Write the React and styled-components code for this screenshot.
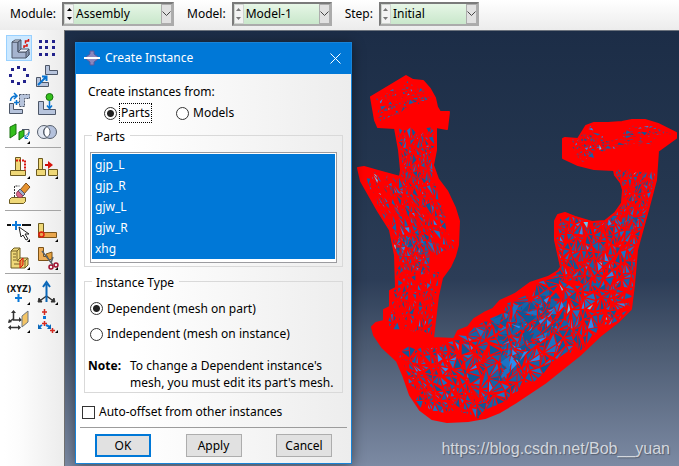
import React, { useState } from "react";
import styled, { createGlobalStyle, css } from "styled-components";

const GlobalStyle = createGlobalStyle`
  *, *::before, *::after { box-sizing: border-box; }
  body {
    margin: 0;
    background: #fff;
    color: #000;
    font-family: "Noto Sans", "Open Sans", sans-serif;
    font-size: 12px;
    line-height: 18px;
  }
  button, select, input { font: inherit; color: inherit; margin: 0; }
`;

/* ---------- page frame ---------- */

const Page = styled.div`
  display: flex;
  flex-direction: column;
  min-height: 100vh;
`;

const ContextBar = styled.header`
  display: flex;
  align-items: center;
  gap: 13px;
  height: 30px;
  padding: 0 10px 2px;
  background: linear-gradient(#fff, #ececec);
`;

const ContextLabel = styled.label`
  display: flex;
  align-items: center;
  gap: 6px;
`;

const Combo = styled.span`
  display: flex;
  width: ${(p) => p.$width}px;
  height: 24px;
  border: 2px solid;
  border-color: #7a7a7a #ababab #ababab #7a7a7a;
  background: linear-gradient(#e6f6e6, #c9e7cb);
`;

const Spinner = styled.span`
  display: flex;
  flex-direction: column;
  flex: none;
  width: 10px;
  border: 1px solid #cfd4cf;
  background: #f3f3f3;
  color: ${(p) => (p.$dim ? "#777" : "#000")};
`;

const SpinButton = styled.button`
  display: flex;
  flex: 1;
  align-items: center;
  justify-content: center;
  padding: 0;
  border: 0;
  background: none;
`;

const ComboSelect = styled.select`
  flex: 1;
  min-width: 0;
  padding: 0 2px;
  border: 0;
  outline: 0;
  appearance: none;
  background: transparent;
`;

const ComboArrow = styled.span`
  display: flex;
  align-items: center;
  justify-content: center;
  flex: none;
  width: 11px;
  border: 1px solid #adadad;
  background: #e1e1e1;
`;

const Workspace = styled.div`
  display: flex;
  flex: 1;
`;

const Toolbox = styled.nav`
  flex: none;
  width: 65px;
  padding: 4px 3px 0 5px;
  border-right: 1px solid #6f6f6f;
  background: linear-gradient(90deg, #fff 4px, #fcfcfc 20px, #ececec);
`;

const ToolGroup = styled.div`
  display: grid;
  grid-template-columns: repeat(2, 28px);
  grid-auto-rows: 28px;
  padding-bottom: 1px;
  & + & {
    padding-top: 5px;
    border-top: 1px solid #a5a5a5;
  }
`;

const ToolButton = styled.button`
  position: relative;
  && { margin: 1px; }
  padding: 0;
  border: 0;
  background: none;
  ${(p) =>
    p.$active &&
    css`
      background: #cce8ff;
      box-shadow: inset 0 0 0 1px #99d1ff;
    `}
  svg { display: block; }
`;

const Flyout = styled.span`
  position: absolute;
  right: 2px;
  bottom: 1px;
  width: 3px;
  height: 3px;
  background: #000;
  clip-path: polygon(100% 0, 100% 100%, 0 100%);
`;

const Viewport = styled.main`
  position: relative;
  flex: 1;
  min-width: 0;
  overflow: hidden;
  border-top: 1px solid #6c737d;
  background: linear-gradient(#1c2d47, #24364f 35%, #2c3d57 57%, #4a5970 72%, #7c8aa3);
`;

const MeshDrawing = styled.svg`
  display: block;
  width: 100%;
`;

const Watermark = styled.div`
  position: absolute;
  right: 9px;
  bottom: 6px;
  color: #d3d7de;
  font: 16px/22px "Liberation Sans", sans-serif;
  text-shadow: 1px 1px 1px #555f70;
`;

/* ---------- dialog ---------- */

const Dialog = styled.section`
  position: absolute;
  left: 10px;
  top: 11px;
  width: 277px;
  border: 1px solid #1883d7;
  background: linear-gradient(90deg, #fff 20%, #ededed);
  box-shadow: 0 2px 12px rgba(0, 0, 0, 0.45);
`;

const TitleBar = styled.header`
  display: flex;
  align-items: center;
  gap: 5px;
  height: 31px;
  padding: 0 10px 1px 8px;
  background: #0078d7;
  color: #fff;
`;

const Title = styled.h1`
  flex: 1;
  margin: 0;
  font-size: 12px;
  font-weight: 400;
`;

const CloseButton = styled.button`
  display: flex;
  padding: 0;
  border: 0;
  background: none;
`;

const DialogForm = styled.form`
  padding: 9px 8px 0;
`;

const SourceGroup = styled.div`
  padding: 0 4px;
`;

const SourceOptions = styled.div`
  display: flex;
  gap: 25px;
  padding: 2px 0 0 16px;
`;

const Choice = styled.label`
  display: flex;
  align-items: center;
  gap: 3px;
  height: ${(p) => p.$height || 20}px;
`;

const ChoiceText = styled.span`
  padding: 0 1px;
  outline: ${(p) => (p.$focused ? "1px dotted #000" : "0")};
`;

const Radio = styled.input`
  flex: none;
  width: 13px;
  height: 13px;
  border: 1px solid #333;
  border-radius: 50%;
  appearance: none;
  background: #fff;
  &:checked { background: radial-gradient(circle, #222 3px, #fff 4px); }
`;

const CheckBox = styled.input`
  flex: none;
  width: 13px;
  height: 13px;
  border: 1px solid #333;
  appearance: none;
  background: #fff;
  &:checked { background: #333; box-shadow: inset 0 0 0 2px #fff; }
`;

const Group = styled.fieldset`
  min-width: 0;
  margin: ${(p) => p.$top}px 0 0;
  padding: 0 5px ${(p) => p.$bottom}px;
  border: 1px solid #d9d9d9;
`;

const Legend = styled.legend`
  margin-left: 2px;
  padding: 4px 5px 0 4px;
`;

const PartList = styled.ul`
  margin: 6px 0 0;
  padding: 1px 1px 3px;
  border: 1px solid #9b9b9f;
  list-style: none;
  background: linear-gradient(#fff, #fff) padding-box;
`;

const PartItem = styled.li`
  height: 21px;
  padding: 2px 3px 0;
  background: #0078d7;
  color: #fff;
`;

const Note = styled.p`
  display: flex;
  gap: 9px;
  margin: 14px -4px 0 -2px;
  line-height: 17px;
  white-space: nowrap;
`;

const AutoOffset = styled.div`
  margin: 9px 0 0 -2px;
`;

const Actions = styled.footer`
  display: flex;
  justify-content: space-between;
  margin: 5px -4px 0;
  padding: 6px 15px 6px;
  border-top: 1px solid #9c9c9c;
`;

const ActionButton = styled.button`
  width: 56px;
  height: 23px;
  padding: 0;
  border: ${(p) => (p.$default ? "2px solid #0078d7" : "1px solid #adadad")};
  background: #e1e1e1;
  line-height: 18px;
`;

/* ---------- tool icons ---------- */

const STEEL = { fill: "#b7c4dc", stroke: "#4c5668", strokeWidth: 1 };
const GOLD = { fill: "#efd878", stroke: "#6b5a20", strokeWidth: 1 };
const GREEN = { fill: "#33c01c", stroke: "#197010", strokeWidth: 1 };
const dots = (pts, s = 3) =>
  pts.map(([x, y]) => <rect key={`${x}-${y}`} x={x} y={y} width={s} height={s} fill="#22228c" />);

const icons = {
  instance: (
    <>
      <path d="M7 8h6v10h11v3l-3 3H7z" {...STEEL} fill="#a5b4cf" />
      <path d="M7 8l3-2h6l-3 2zM13 18l3-3h8l-3 3z" {...STEEL} fill="#eaf0fa" />
      <path d="M13 8l3-2v9l-3 3z" {...STEEL} fill="#8796af" />
      <path d="M21 18l3-3v6l-3 3z" {...STEEL} fill="#8796af" />
      <path d="M23.500 5v2h-3v2.500M22 10v2h-3v2" stroke="#d8140c" strokeWidth="1.500" fill="none" />
    </>
  ),
  linear: dots([6, 12, 19].flatMap((y) => [6, 12, 19].map((x) => [x, y]))),
  radial: dots([[12, 4], [18, 6], [21, 12], [18, 18], [12, 20], [6, 18], [4, 12], [6, 6]]),
  translate: (
    <>
      <path d="M12.500 3.500h4v5h8v4h-12z" {...STEEL} />
      <path d="M3.500 15.500h4v5h8v4h-12z" {...STEEL} />
      <path d="M5 23l8-8M9 14.500h4.500V19" stroke="#0874d1" strokeWidth="2" fill="none" />
    </>
  ),
  rotate: (
    <>
      <path d="M14.500 4.500h10v4h-5v8h-5z" {...STEEL} strokeDasharray="2 1" />
      <path d="M4.500 13.500h4v6h9v4h-13z" {...STEEL} />
      <path d="M5.500 11c0-3 1-5 6-5M9 3l3 3-3 3M11.500 10v5M9 12.500h5" stroke="#0874d1" strokeWidth="1.500" fill="none" />
    </>
  ),
  toPoint: (
    <>
      <path d="M5.500 11.500h5v8h12v5h-17z" {...STEEL} />
      <circle cx="16.500" cy="7" r="3.500" {...GREEN} />
      <path d="M16.500 11v7M14 15.500l2.500 3 2.500-3" stroke="#0874d1" strokeWidth="1.500" fill="none" />
    </>
  ),
  face: (
    <>
      <path d="M5 9l6-3v10l-6 4z" {...GREEN} />
      <path d="M14 14l5-2v6l-5 4z" {...GREEN} />
      <path d="M17 11.500h7v3l-3 3" {...STEEL} fill="none" />
      <path d="M20 20c3-1 4-3 4-6M20 17v3.500h3" stroke="#0874d1" strokeWidth="1" fill="none" />
    </>
  ),
  boolean: (
    <>
      <circle cx="11" cy="14" r="6.500" fill="#dfe5f0" stroke="#555e6c" />
      <circle cx="17" cy="14" r="6.500" fill="#b4c1dc" stroke="#555e6c" />
      <path d="M14 8.500a6.500 6.500 0 0 1 0 11 6.500 6.500 0 0 1 0-11z" fill="#fff" stroke="#555e6c" />
    </>
  ),
  replace: (
    <>
      <path d="M10.500 4.500h5v13h-5z" {...GOLD} />
      <path d="M5.500 17.500h15v5h-15z" {...GOLD} />
      <path d="M11 7.500h9v10" stroke="#d8140c" strokeWidth="2" strokeDasharray="2 1" fill="none" />
    </>
  ),
  merge: (
    <>
      <path d="M5.500 5.500h4v11h-4zM3.500 16.500h9v6h-9zM15.500 16.500h9v6h-9z" {...GOLD} />
      <path d="M12 12h4" stroke="#c90d08" strokeWidth="2" />
      <path d="M15 8l5 4-5 4z" fill="#d8140c" />
    </>
  ),
  erase: (
    <>
      <path d="M4.500 18.500l2-2h14v4l-2 2h-14z" {...GOLD} />
      <path d="M9.500 16V5h5" stroke="#333" strokeDasharray="2 1" fill="none" />
      <path d="M15 9l6-7 4 4-6 7z" fill="#e6922f" stroke="#80501b" />
      <path d="M15 8l5 5-2 2-5-5z" fill="#9fb0cb" stroke="#556" />
      <path d="M13 10l5 5c-2 2-4 2-6 0-1-2-1-3 1-5z" fill="#db6788" stroke="#94405a" />
    </>
  ),
  datum: (
    <>
      <path d="M2 9h4M17 9h9" stroke="#111" strokeWidth="2" />
      <path d="M7 9h9M11 5v9" stroke="#0a78d8" strokeWidth="2" />
      <path d="M14 11l2 10 2-2 3 5 2-1-3-5h4z" fill="#fff" stroke="#222" />
    </>
  ),
  partition: (
    <>
      <path d="M5.500 7.500h5v12h-5z" {...GOLD} />
      <path d="M5.500 16.500h18v5h-18z" fill="#e9a64e" stroke="#7b5319" />
      <circle cx="8.500" cy="18.500" r="2.500" fill="none" stroke="#dd2010" strokeWidth="1.500" />
    </>
  ),
  cell: (
    <>
      <path d="M6 7l3-3h6v10h8v7l-3 3H6z" {...GOLD} />
      <path d="M6 7h6v10h8v7M12 7l3-3M12 17l3-3M20 17l3-3M8 10h3M8 13h3M8 16h3M9 20h6" fill="none" stroke="#79642a" />
      <path d="M15 17l3-3v7l-3 3z" fill="#e59a44" stroke="#d8140c" />
    </>
  ),
  cut: (
    <>
      <path d="M5.500 3.500h5v9h5v4h-10z" fill="#eeae59" stroke="#7b5319" />
      <path d="M13 10l6-2v7l-3 1z" fill="#e7a13d" stroke="#7b5319" />
      <path d="M9 7l11 14M20 13l-2 6" stroke="#58616a" strokeWidth="1.500" />
      <circle cx="18" cy="23" r="2" fill="none" stroke="#a01030" strokeWidth="1.500" />
      <circle cx="23" cy="21" r="2" fill="none" stroke="#a01030" strokeWidth="1.500" />
    </>
  ),
  xyz: (
    <>
      <text x="14" y="13" textAnchor="middle" fontFamily="DejaVu Sans" fontWeight="700" fontSize="8" fill="#111">(XYZ)</text>
      <path d="M10 19h7M13.500 15v8" stroke="#0a78d8" strokeWidth="2" />
    </>
  ),
  axis: (
    <>
      <path d="M13.500 17l-7 5M13.500 17l7 5" stroke="#333" strokeWidth="1.500" />
      <path d="M5 23l1-4 3 4zM22 23l-1-4-3 4z" fill="#333" stroke="#333" />
      <path d="M13.500 18V5M10 8l3.500-5L17 8M13.500 14v9" stroke="#0a67b8" strokeWidth="2" fill="none" />
    </>
  ),
  plane: (
    <>
      <path d="M8.500 5v8h7M8 12l-4 3M5 20.500h10" stroke="#333" strokeWidth="1.500" fill="none" />
      <path d="M6 6l2.500-3L11 6zM14 10l3 3-3 2zM4 12l-1 4 4-1zM6 18l-3 2.500 3 2.500zM13 18l3 2.500-3 2.500z" fill="#333" />
      <path d="M17 9l6-5v11l-6 5z" fill="#f3c465" stroke="#6d7782" />
    </>
  ),
  csys: (
    <>
      <path d="M9 5h5M11.500 2v6M9 16.500h5M11.500 14v5M17 23.500h5M19.500 21v5" stroke="#d22a20" strokeWidth="1.500" />
      <path d="M10 9h3v3h-3z" fill="#0a78d8" />
      <path d="M9 18l-3 2M13 18l4 2" stroke="#0a78d8" strokeWidth="2" />
      <path d="M5 17v5h4zM18 17v5h-4z" fill="#0a67b8" />
    </>
  ),
};

const toolGroups = [
  [
    ["instance", "Create Instance"],
    ["linear", "Linear Pattern"],
    ["radial", "Radial Pattern"],
    ["translate", "Translate Instance"],
    ["rotate", "Rotate Instance"],
    ["toPoint", "Translate To"],
    ["face", "Create Constraint", true],
    ["boolean", "Merge/Cut Instances"],
  ],
  [
    ["replace", "Replace Feature", true],
    ["merge", "Move Feature", true],
    ["erase", "Delete Feature"],
  ],
  [
    ["datum", "Partition Edge", true],
    ["partition", "Partition Face", true],
    ["cell", "Partition Cell", true],
    ["cut", "Remove Faces", true],
  ],
  [
    ["xyz", "Datum Point", true],
    ["axis", "Datum Axis", true],
    ["plane", "Datum Plane", true],
    ["csys", "Datum CSYS", true],
  ],
];

/* ---------- wireframe model ---------- */

const OUTLINE =
  "M371 97L406 76 413 80 423 81 430 89 435 98 437 107 440 112 449 112 447 129 436 127 436 150 433 165 438 179 447 191 455 208 459 221 458 245 455 256 450 267 442 278 438 296 433 338 454 339 458 331 468 327 474 319 484 313 493 309 500 301 515 294 530 283 548 277 558 271 561 267 555 240 555 221 558 215 565 213 575 217 592 222 605 221 615 213 622 203 623 190 621 183 615 175 614 170 594 169 578 165 563 158 563 139 565 138 578 139 586 126 594 123 608 123 622 122 632 120 645 120 658 124 676 133 676 138 658 151 656 180 648 210 637 250 634 285 631 309 618 322 600 336 580 355 545 383 515 403 500 412 485 418 468 421 447 422 432 419 420 410 410 395 403 375 397 361 382 347 374 335 372 327 376 323 384 321 384 310 390 307 390 291 396 288 395 255 390 230 378 211 361 181 358 168 364 167 378 171 400 177 401 170 399 150 395 128 378 127 375 120z";

/* corners run clockwise from top left; line = wire thickness around a facet */
const patches = [
  { q: [[376, 99], [409, 80], [432, 97], [380, 122]], nu: 10, nv: 7, line: 0.9 },
  { q: [[397, 130], [434, 130], [433, 178], [402, 182]], nu: 8, nv: 6, line: 0.8 },
  { q: [[364, 173], [434, 180], [457, 250], [396, 256]], nu: 16, nv: 8, line: 0.9 },
  { q: [[396, 235], [430, 235], [430, 275], [398, 270]], nu: 7, nv: 5, line: 0.7 },
  { q: [[397, 268], [441, 268], [431, 334], [386, 330]], nu: 11, nv: 8, line: 1 },
  { q: [[396, 350], [458, 342], [482, 418], [420, 408]], nu: 10, nv: 9, line: 0.9 },
  { q: [[458, 338], [556, 274], [574, 352], [480, 416]], nu: 12, nv: 9, line: 0.8 },
  { q: [[492, 322], [550, 286], [562, 330], [500, 378]], nu: 6, nv: 5, line: 0.9 },
  { q: [[556, 278], [634, 290], [628, 312], [574, 354]], nu: 9, nv: 6, line: 0.9 },
  { q: [[557, 217], [646, 215], [632, 292], [557, 280]], nu: 14, nv: 8, line: 0.8 },
  { q: [[618, 170], [655, 172], [644, 222], [600, 224]], nu: 9, nv: 7, line: 0.8 },
  { q: [[567, 142], [590, 126], [618, 148], [580, 162]], nu: 8, nv: 6, line: 0.9 },
  { q: [[594, 148], [640, 122], [672, 134], [645, 148]], nu: 9, nv: 6, line: 0.8 },
];

const SHADES = ["#1462a8", "#1d72c4", "#0f5797", "#2b8cf0", "#69c4f0"];

function buildFacets() {
  let seed = 20177;
  const rnd = () => {
    seed = (seed * 16807) % 2147483647;
    return seed / 2147483647;
  };
  const out = SHADES.map(() => "");
  const dist = (a, b) => Math.hypot(a[0] - b[0], a[1] - b[1]);
  const addFacet = (a, b, c, line) => {
    const la = dist(b, c);
    const lb = dist(a, c);
    const lc = dist(a, b);
    const p = la + lb + lc;
    const area = Math.abs((b[0] - a[0]) * (c[1] - a[1]) - (c[0] - a[0]) * (b[1] - a[1])) / 2;
    const k = 1 - (line * (0.4 + rnd() * 0.8)) / ((2 * area) / p);
    if (!(k > 0.1)) return;
    const ix = (la * a[0] + lb * b[0] + lc * c[0]) / p;
    const iy = (la * a[1] + lb * b[1] + lc * c[1]) / p;
    const pts = [a, b, c].map(([x, y]) => `${(ix + (x - ix) * k).toFixed(1)} ${(iy + (y - iy) * k).toFixed(1)}`);
    const r = rnd();
    const shade = r < 0.5 ? 0 : r < 0.68 ? 1 : r < 0.93 ? 2 : r < 0.992 ? 3 : 4;
    out[shade] += `M${pts.join("L")}z`;
  };
  patches.forEach(({ q, nu, nv, line }) => {
    const grid = [];
    for (let j = 0; j <= nv; j++) {
      const row = [];
      for (let i = 0; i <= nu; i++) {
        const u = (i + (rnd() - 0.5) * 0.9) / nu;
        const v = (j + (rnd() - 0.5) * 0.9) / nv;
        row.push([0, 1].map((d) => (q[0][d] * (1 - u) + q[1][d] * u) * (1 - v) + (q[3][d] * (1 - u) + q[2][d] * u) * v));
      }
      grid.push(row);
    }
    for (let j = 0; j < nv; j++) {
      for (let i = 0; i < nu; i++) {
        const [a, b, c, d] = [grid[j][i], grid[j][i + 1], grid[j + 1][i + 1], grid[j + 1][i]];
        const pairs = rnd() < 0.5 ? [[a, b, c], [a, c, d]] : [[a, b, d], [b, c, d]];
        pairs.forEach(([x, y, z]) => {
          if (rnd() < 0.75) {
            const t = 0.3 + rnd() * 0.4;
            const m = [y[0] * t + z[0] * (1 - t), y[1] * t + z[1] * (1 - t)];
            addFacet(x, y, m, line);
            addFacet(x, m, z, line);
          } else addFacet(x, y, z, line);
        });
      }
    }
  });
  return out;
}

const facets = buildFacets();

function Model() {
  return (
    <MeshDrawing viewBox="65 31 614 435" role="img" aria-label="Mandible mesh model">
      <clipPath id="model-outline"><path d={OUTLINE} /></clipPath>
      <path d={OUTLINE} fill="#f00" />
      <g clipPath="url(#model-outline)">
        {facets.map((d, i) => <path key={SHADES[i]} d={d} fill={SHADES[i]} />)}
      </g>
      <path d={OUTLINE} fill="none" stroke="#f00" strokeWidth="2" strokeLinejoin="round" />
    </MeshDrawing>
  );
}

/* ---------- components ---------- */

function ContextField({ label, value, width, dim }) {
  return (
    <ContextLabel>
      {label}
      <Combo $width={width}>
        <Spinner $dim={dim}>
          <SpinButton type="button" aria-label={`Previous ${label}`}>
            <svg width="5" height="3"><path d="M0 3L2.500 0 5 3z" fill="currentColor" /></svg>
          </SpinButton>
          <SpinButton type="button" aria-label={`Next ${label}`}>
            <svg width="5" height="3"><path d="M0 0L2.500 3 5 0z" fill="currentColor" /></svg>
          </SpinButton>
        </Spinner>
        <ComboSelect aria-label={label} defaultValue={value}><option>{value}</option></ComboSelect>
        <ComboArrow>
          <svg width="9" height="6"><path d="M.5.5l4 4 4-4" fill="none" stroke="#444" /></svg>
        </ComboArrow>
      </Combo>
    </ContextLabel>
  );
}

function CreateInstanceDialog() {
  const [source, setSource] = useState("Parts");
  const [type, setType] = useState("dependent");
  return (
    <Dialog role="dialog" aria-labelledby="dialog-title">
      <TitleBar>
        <svg width="16" height="16">
          <path d="M6 1h4v3l4 3v2l-4 3v3H6v-3L2 9V7l4-3z" fill="#8b87bd" stroke="#59599c" />
          <path d="M0 8h16" stroke="#fff" strokeWidth="2" />
        </svg>
        <Title id="dialog-title">Create Instance</Title>
        <CloseButton type="button" aria-label="Close">
          <svg width="11" height="11"><path d="M.5.5l10 10M10.500.5l-10 10" stroke="#fff" /></svg>
        </CloseButton>
      </TitleBar>
      <DialogForm onSubmit={(e) => e.preventDefault()}>
        <SourceGroup role="radiogroup" aria-labelledby="source-label">
          <span id="source-label">Create instances from:</span>
          <SourceOptions>
            {["Parts", "Models"].map((name) => (
              <Choice key={name}>
                <Radio type="radio" name="source" checked={source === name} onChange={() => setSource(name)} />
                <ChoiceText $focused={source === name}>{name}</ChoiceText>
              </Choice>
            ))}
          </SourceOptions>
        </SourceGroup>
        <Group $top={1} $bottom={3}>
          <Legend>Parts</Legend>
          <PartList role="listbox" aria-label="Parts" aria-multiselectable="true">
            {["gjp_L", "gjp_R", "gjw_L", "gjw_R", "xhg"].map((part) => (
              <PartItem key={part} role="option" aria-selected="true">{part}</PartItem>
            ))}
          </PartList>
        </Group>
        <Group $top={3} $bottom={1}>
          <Legend>Instance Type</Legend>
          <Choice $height={33}>
            <Radio type="radio" name="type" checked={type === "dependent"} onChange={() => setType("dependent")} />
            <ChoiceText>Dependent (mesh on part)</ChoiceText>
          </Choice>
          <Choice $height={18}>
            <Radio type="radio" name="type" checked={type === "independent"} onChange={() => setType("independent")} />
            <ChoiceText>Independent (mesh on instance)</ChoiceText>
          </Choice>
          <Note>
            <b>Note:</b>
            <span>To change a Dependent instance's<br />mesh, you must edit its part's mesh.</span>
          </Note>
        </Group>
        <AutoOffset>
          <Choice>
            <CheckBox type="checkbox" />
            <ChoiceText>Auto-offset from other instances</ChoiceText>
          </Choice>
        </AutoOffset>
        <Actions>
          <ActionButton type="submit" $default>OK</ActionButton>
          <ActionButton type="button">Apply</ActionButton>
          <ActionButton type="button">Cancel</ActionButton>
        </Actions>
      </DialogForm>
    </Dialog>
  );
}

export default function App() {
  return (
    <Page>
      <GlobalStyle />
      <ContextBar>
        <ContextField label="Module:" value="Assembly" width={112} />
        <ContextField label="Model:" value="Model-1" width={100} dim />
        <ContextField label="Step:" value="Initial" width={100} dim />
      </ContextBar>
      <Workspace>
        <Toolbox aria-label="Assembly tools">
          {toolGroups.map((group) => (
            <ToolGroup key={group[0][0]}>
              {group.map(([id, label, flyout]) => (
                <ToolButton key={id} type="button" aria-label={label} $active={id === "instance"}>
                  <svg width="26" height="26" viewBox="1 1 26 26">{icons[id]}</svg>
                  {flyout && <Flyout />}
                </ToolButton>
              ))}
            </ToolGroup>
          ))}
        </Toolbox>
        <Viewport>
          <Model />
          <CreateInstanceDialog />
          <Watermark>https://blog.csdn.net/Bob__yuan</Watermark>
        </Viewport>
      </Workspace>
    </Page>
  );
}
